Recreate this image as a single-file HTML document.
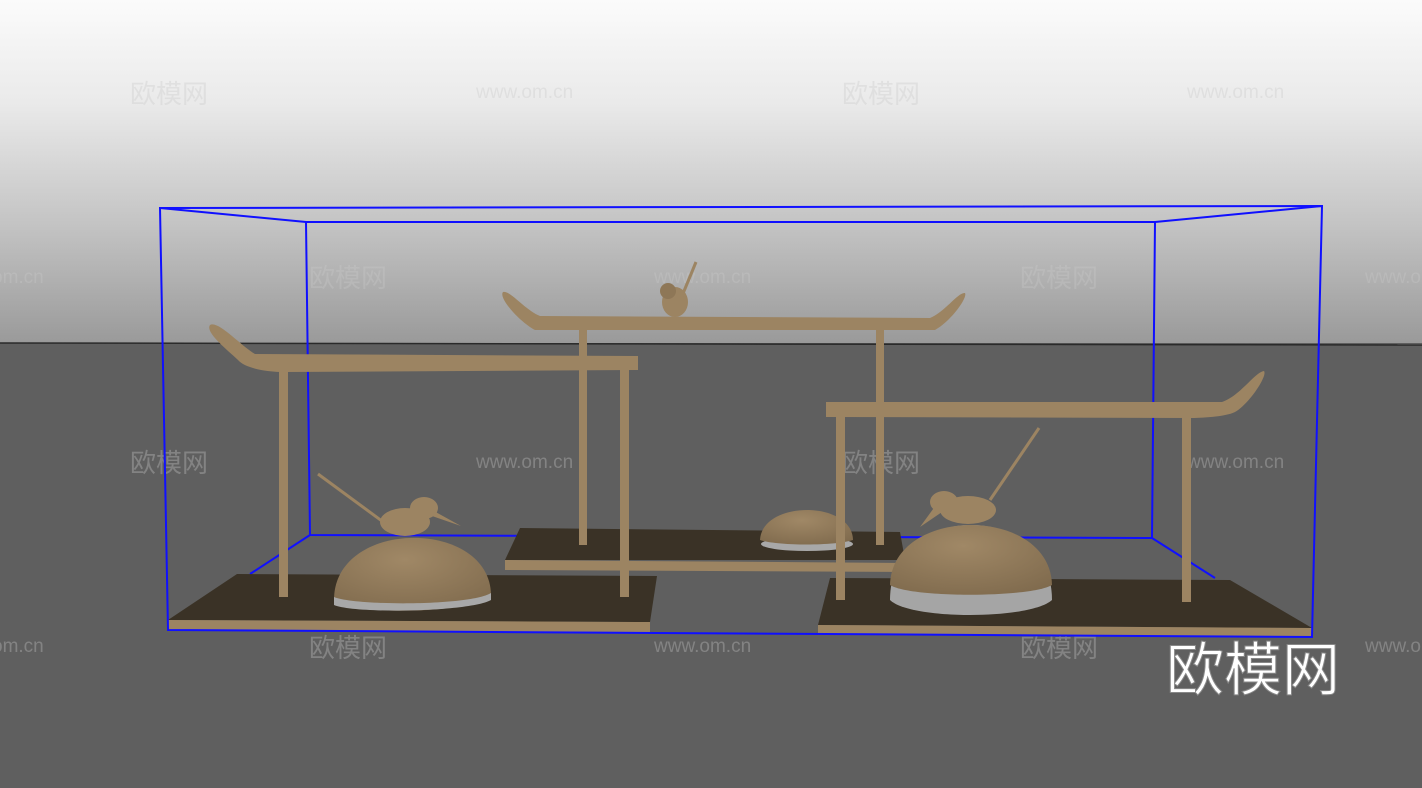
<!DOCTYPE html>
<html><head><meta charset="utf-8"><style>
html,body{margin:0;padding:0;width:1422px;height:788px;overflow:hidden;background:#5f5f5f}
svg{display:block}
.wm{font-family:"Liberation Sans","Noto Sans CJK SC",sans-serif;fill:rgba(200,200,200,0.35);font-size:26px}
.ww{font-family:"Liberation Sans",sans-serif;fill:rgba(200,200,200,0.35);font-size:19px}
</style></head><body>
<svg width="1422" height="788" viewBox="0 0 1422 788" xmlns="http://www.w3.org/2000/svg">
<defs>
<linearGradient id="sky" x1="0" y1="0" x2="0" y2="1">
<stop offset="0" stop-color="#fbfbfb"/><stop offset="0.3" stop-color="#eaeaea"/><stop offset="0.65" stop-color="#c4c4c4"/><stop offset="1" stop-color="#9a9a9a"/>
</linearGradient>
<radialGradient id="dome" cx="0.45" cy="0.3" r="0.8"><stop offset="0" stop-color="#a08866"/><stop offset="1" stop-color="#7f6a4d"/></radialGradient>
</defs>
<rect x="0" y="0" width="1422" height="343" fill="url(#sky)"/>
<rect x="0" y="343" width="1422" height="445" fill="#5f5f5f"/>
<line x1="0" y1="343" x2="1422" y2="345" stroke="#2a2a2a" stroke-width="1.5"/>

<text class="wm" x="130" y="103">欧模网</text><text class="ww" x="476" y="98">www.om.cn</text>
<text class="wm" x="842" y="103">欧模网</text><text class="ww" x="1187" y="98">www.om.cn</text>
<text class="ww" x="-8" y="283">om.cn</text><text class="wm" x="309" y="287">欧模网</text><text class="ww" x="654" y="283">www.om.cn</text>
<text class="wm" x="1020" y="287">欧模网</text><text class="ww" x="1365" y="283">www.om.cn</text>
<text class="wm" x="130" y="472">欧模网</text><text class="ww" x="476" y="468">www.om.cn</text>
<text class="wm" x="842" y="472">欧模网</text><text class="ww" x="1187" y="468">www.om.cn</text>
<text class="ww" x="-8" y="652">om.cn</text><text class="wm" x="309" y="657">欧模网</text><text class="ww" x="654" y="652">www.om.cn</text>
<text class="wm" x="1020" y="657">欧模网</text><text class="ww" x="1365" y="652">www.om.cn</text>

<g stroke="#1010ff" stroke-width="2" fill="none">
<polyline points="306,222 1155,222 1152,538 310,535 306,222"/>
<line x1="160" y1="208" x2="306" y2="222"/><line x1="1322" y1="206" x2="1155" y2="222"/>
<line x1="310" y1="535" x2="250" y2="574"/><line x1="1152" y1="538" x2="1215" y2="578"/>
</g>

<polygon points="520,528 900,532 905,560 505,560" fill="#3a3226"/>
<polygon points="505,560 905,563 905,572 505,570" fill="#9c8462"/>
<g fill="#9c8462">
<rect x="579" y="328" width="8" height="217"/><rect x="876" y="328" width="8" height="217"/>
<path d="M503,292 C510,290 525,310 540,316 L930,318 C945,312 958,292 965,293 C968,298 950,322 935,330 L535,330 C520,322 498,298 503,292Z"/>
</g>
<ellipse cx="807" cy="544" rx="46" ry="7" fill="#a8a8a8"/>
<path d="M760,540 C762,500 852,500 853,540 C835,546 778,546 760,540Z" fill="url(#dome)"/>
<ellipse cx="675" cy="302" rx="13" ry="15" fill="#9c8462"/><ellipse cx="668" cy="291" rx="8" ry="8" fill="#8e7757"/>
<line x1="682" y1="296" x2="696" y2="262" stroke="#9c8462" stroke-width="3"/>

<polygon points="237,574 657,576 650,622 168,620" fill="#3a3226"/>
<polygon points="168,620 650,622 650,632 168,630" fill="#9c8462"/>
<g fill="#9c8462">
<rect x="279" y="368" width="9" height="229"/><rect x="620" y="368" width="9" height="229"/>
<path d="M210,325 C218,320 240,345 255,354 L638,356 L638,370 L285,372 C265,372 245,368 238,360 C225,348 205,332 210,325Z"/>
</g>
<path d="M334,600 C334,518 490,518 491,595 C470,615 350,615 334,600Z" fill="url(#dome)"/>
<path d="M334,597 C355,606 470,606 491,593 L491,600 C470,612 355,614 334,605Z" fill="#a8a8a8"/>
<ellipse cx="405" cy="522" rx="25" ry="14" fill="#9c8462"/><ellipse cx="424" cy="508" rx="14" ry="11" fill="#9c8462"/>
<polygon points="432,510 461,526 432,516" fill="#9c8462"/>
<line x1="318" y1="474" x2="386" y2="524" stroke="#9c8462" stroke-width="3"/>

<polygon points="830,578 1230,580 1312,628 818,625" fill="#3a3226"/>
<polygon points="818,625 1312,628 1312,637 818,634" fill="#9c8462"/>
<g fill="#9c8462">
<rect x="836" y="415" width="9" height="185"/><rect x="1182" y="415" width="9" height="187"/>
<path d="M826,402 L1222,402 C1240,396 1255,372 1264,371 C1268,376 1248,405 1235,412 C1225,417 1200,418 1190,418 L826,417Z"/>
</g>
<path d="M890,600 C890,500 1052,500 1052,600 C1030,620 910,620 890,600Z" fill="#a5a5a5"/>
<path d="M890,585 C892,505 1050,505 1052,585 C1030,598 910,598 890,585Z" fill="url(#dome)"/>
<ellipse cx="968" cy="510" rx="28" ry="14" fill="#9c8462"/><ellipse cx="944" cy="502" rx="14" ry="11" fill="#9c8462"/>
<polygon points="936,505 920,527 942,512" fill="#9c8462"/>
<line x1="990" y1="500" x2="1039" y2="428" stroke="#9c8462" stroke-width="3"/>

<polygon points="160,208 1322,206 1312,637 168,630" fill="none" stroke="#1010ff" stroke-width="2"/>

<text x="1166" y="690" font-family="'Noto Sans CJK SC',sans-serif" font-size="58" fill="#ffffff" stroke="#888" stroke-width="1">欧模网</text>
</svg>
</body></html>
